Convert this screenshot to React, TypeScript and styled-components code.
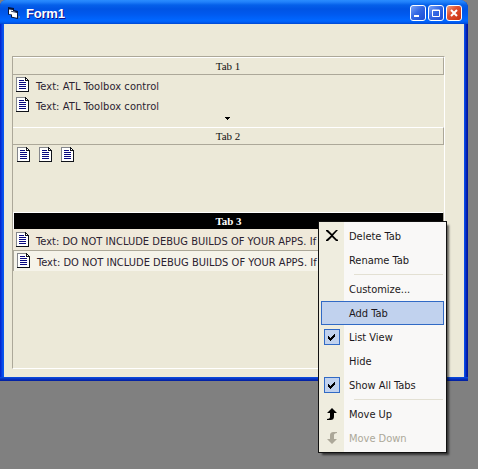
import React from 'react';
import styled, { createGlobalStyle, css } from 'styled-components';

const GlobalStyle = createGlobalStyle`
  *, *::before, *::after { box-sizing: border-box; }
  html, body { margin: 0; height: 469px; overflow: hidden; background: #808080; }
  svg { display: block; flex: none; }
`;

const uiFont = css`
  font-family: 'DejaVu Sans Condensed', 'DejaVu Sans', sans-serif;
  font-stretch: condensed;
  font-size: 11px;
  white-space: nowrap;
`;

const Desktop = styled.main`
  position: relative;
  width: 478px;
  height: 469px;
  overflow: hidden;
  background: #808080;
`;

const FormWindow = styled.section`
  display: flex;
  flex-direction: column;
  width: 468px;
  height: 381px;
  padding: 0 4px 4px;
  border-radius: 6px 8px 0 0;
  background: linear-gradient(to bottom, transparent 377px, #0a50e0 377px, #0831c0 379px, #001d9c 381px),
    linear-gradient(to right, #0020c8 0, #0831d9 1px, #0855ee 3px, #0855ee 464px, #0840dc 465px, #0018a4 467px);
`;

const TitleBar = styled.header`
  display: flex;
  align-items: center;
  height: 24px;
  flex: none;
  margin: 0 -4px;
  padding: 2px 6px 0 8px;
  border-radius: 6px 8px 0 0;
  background: linear-gradient(to bottom, #2a8cff 0, #2080fa 2px, #0560ea 5px, #0054e4 9px, #0059ee 14px, #0066ff 20px, #0060f8 22px, #0047d0 24px);
`;

const Title = styled.h1`
  flex: 1;
  margin: 0 0 0 5px;
  padding-top: 1px;
  font: bold 13px/21px 'Liberation Sans', Arial, sans-serif;
  letter-spacing: -0.2px;
  color: #fff;
  text-shadow: 1px 1px 0 #0f1089;
`;

const CaptionButtons = styled.div`
  display: flex;
  gap: 2px;
`;

const CaptionButton = styled.button<{ $close?: boolean }>`
  display: grid;
  place-items: center;
  width: 16px;
  height: 16px;
  padding: 0;
  border: 1px solid #fff;
  border-radius: 3px;
  background: ${({ $close }) =>
    $close
      ? 'linear-gradient(135deg, #f0a080, #e05030 40%, #c83010)'
      : 'linear-gradient(135deg, #7ba4f8, #3468e4 45%, #1c4cd4)'};
`;

const Client = styled.div`
  flex: 1;
  padding: 32px 19px 8px 8px;
  background: #ece9d8;
`;

const Toolbox = styled.div`
  display: flex;
  flex-direction: column;
  height: 313px;
  border: 1px solid;
  border-color: #aca899 #fff #fff #aca899;
`;

const TabSection = styled.section<{ $height: number }>`
  display: flex;
  flex-direction: column;
  height: ${({ $height }) => $height}px;
`;

const TabHeader = styled.header<{ $active?: boolean }>`
  height: 18px;
  flex: none;
  border-top: 1px solid #fff;
  border-right: 1px solid #aca899;
  border-bottom: 1px solid #aca899;
  font: 11px/16px 'Liberation Serif', 'Times New Roman', serif;
  text-align: center;
  color: #111;
  ${({ $active }) =>
    $active &&
    css`
      height: 17px;
      border-bottom: 0;
      border-left: 1px solid #fff;
      background: #000;
      color: #fff;
      font-weight: bold;
      line-height: 17px;
    `}
`;

const ToolRow = styled.div<{ $state?: 'hover' | 'pressed' }>`
  display: flex;
  align-items: flex-start;
  gap: 6px;
  height: 20px;
  flex: none;
  padding: 2px 0 0 3px;
  ${uiFont}
  line-height: 19px;
  letter-spacing: 0.08px;
  color: #2b2230;
  overflow: hidden;
  ${({ $state }) =>
    $state === 'hover' &&
    css`
      height: 22px;
      padding-top: 3px;
      border-bottom: 1px solid #aca899;
      letter-spacing: 0.03px;
      background: #efe9da;
    `}
  ${({ $state }) =>
    $state === 'pressed' &&
    css`
      border-left: 1px solid #aca899;
      letter-spacing: 0.02px;
      background: #f5f3e9;
    `}
`;

const IconStrip = styled.div`
  display: flex;
  gap: 8px;
  padding: 2px 4px;
`;

const ScrollDown = styled.div`
  display: flex;
  justify-content: center;
  padding: 2px 2px 0 0;
`;

const ContextMenu = styled.nav`
  position: absolute;
  left: 318px;
  top: 221px;
  width: 129px;
  height: 232px;
  padding: 2px;
  border: 1px solid #111;
  background: linear-gradient(to right, #efeddf 0, #efeddf 25px, #f9f8f7 25px);
  box-shadow: 3px 3px 2px -1px rgba(0, 0, 0, 0.6);
`;

const MenuItem = styled.div<{ $selected?: boolean; $disabled?: boolean }>`
  display: grid;
  grid-template-columns: 20px 1fr;
  column-gap: 7px;
  align-items: center;
  height: 24px;
  width: 123px;
  border: 1px solid ${({ $selected }) => ($selected ? '#316ac5' : 'transparent')};
  background: ${({ $selected }) => ($selected ? '#c1d2ee' : 'transparent')};
  color: ${({ $disabled }) => ($disabled ? '#aca899' : '#1c1820')};
  ${uiFont}
  letter-spacing: -0.02px;
`;

const MenuGlyph = styled.span`
  display: grid;
  place-items: center;
`;

const CheckBox = styled.span`
  display: grid;
  place-items: center;
  width: 16px;
  height: 16px;
  border: 1px solid #316ac5;
  background: #c1d2ee;
`;

const Separator = styled.hr`
  height: 1px;
  margin: 2px 1px 2px 33px;
  border: 0;
  background: #e3e0d3;
`;

const PageIcon = () => (
  <svg width="14" height="15" viewBox="0 0 14 15" shapeRendering="crispEdges">
    <path d="M0 0H9V1H10V2H11V3H13V15H0Z" fill="#fff" />
    <path d="M0 0H9V1H1V14H0Z" fill="#85878c" />
    <path d="M9 0H10V1H11V2H12V3H13V15H0V14H12V4H9Z" fill="#10131a" />
    <path d="M10 2H11V3H10Z" fill="#fff" />
    <path d="M3 3H8V4H3ZM3 5H10V6H3ZM3 7H10V8H3ZM3 9H10V10H3ZM3 11H10V12H3Z" fill="#080880" />
  </svg>
);

const FormIcon = () => (
  <svg width="13" height="13" viewBox="0 0 13 13">
    <path d="M0 0L6 1V3L10 4V12L3 10.5V8L0 7.5Z" fill="#06153c" />
    <path d="M1 2.5L5 3V4L9 5.5V10.8L4 9.8V7.5L1 7Z" fill="#fff" />
    <path d="M3 4.2L9 5.6" stroke="#06153c" strokeWidth="0.8" />
    <path d="M10.5 9H12V11H10.5Z" fill="#8b9b99" opacity="0.6" />
  </svg>
);

const CheckIcon = () => (
  <svg width="8" height="8" viewBox="0 0 8 8" shapeRendering="crispEdges">
    <path d="M0 3H1V4H2V5H3V4H4V3H5V2H6V1H7V4H6V5H5V6H4V7H3V8H2V7H1V6H0Z" fill="#000" />
  </svg>
);

const DeleteIcon = () => (
  <svg width="14" height="14" viewBox="0 0 14 14">
    <path d="M1 1H3L7 5L11 1H13L8 6.5L12 10.5H13V12H11L7 8L3 12H1V11L6 6.5L1 2Z" fill="#000" />
  </svg>
);

const MoveIcon = ({ down }: { down?: boolean }) => (
  <svg width="12" height="14" viewBox="0 0 12 14">
    <path
      d={
        down
          ? 'M11 1H8C5 1 4 2 4 5V8H1L6 13L11 8H8V4C8 3 9 2 11 2Z'
          : 'M1 13H4C7 13 8 12 8 9V6H11L6 1L1 6H4V10C4 11 3 12 1 12Z'
      }
      fill={down ? '#aca899' : '#000'}
    />
  </svg>
);

type Entry =
  | { kind: 'separator' }
  | { kind: 'item'; label: string; glyph?: React.ReactNode; selected?: boolean; disabled?: boolean };

const checked = (
  <CheckBox>
    <CheckIcon />
  </CheckBox>
);

const entries: Entry[] = [
  { kind: 'item', label: 'Delete Tab', glyph: <DeleteIcon /> },
  { kind: 'item', label: 'Rename Tab' },
  { kind: 'separator' },
  { kind: 'item', label: 'Customize...' },
  { kind: 'item', label: 'Add Tab', selected: true },
  { kind: 'item', label: 'List View', glyph: checked },
  { kind: 'item', label: 'Hide' },
  { kind: 'item', label: 'Show All Tabs', glyph: checked },
  { kind: 'separator' },
  { kind: 'item', label: 'Move Up', glyph: <MoveIcon /> },
  { kind: 'item', label: 'Move Down', glyph: <MoveIcon down />, disabled: true },
];

export default function App() {
  return (
    <Desktop>
      <GlobalStyle />
      <FormWindow>
        <TitleBar>
          <FormIcon />
          <Title>Form1</Title>
          <CaptionButtons>
            <CaptionButton aria-label="Minimize">
              <svg width="10" height="10" viewBox="0 0 10 10">
                <path d="M1 7H6V9H1Z" fill="#fff" />
              </svg>
            </CaptionButton>
            <CaptionButton aria-label="Maximize">
              <svg width="10" height="10" viewBox="0 0 10 10">
                <path d="M1.5 2H8.5V8.5H1.5ZM1 2.5H9" fill="none" stroke="#fff" />
              </svg>
            </CaptionButton>
            <CaptionButton $close aria-label="Close">
              <svg width="10" height="10" viewBox="0 0 10 10">
                <path d="M2 2L8 8M8 2L2 8" stroke="#fff" strokeWidth="2" />
              </svg>
            </CaptionButton>
          </CaptionButtons>
        </TitleBar>
        <Client>
          <Toolbox>
            <TabSection $height={70}>
              <TabHeader>Tab 1</TabHeader>
              <ToolRow><PageIcon />Text: ATL Toolbox control</ToolRow>
              <ToolRow><PageIcon />Text: ATL Toolbox control</ToolRow>
              <ScrollDown>
                <svg width="5" height="3" viewBox="0 0 5 3" shapeRendering="crispEdges">
                  <path d="M0 0H5V1H4V2H3V3H2V2H1V1H0Z" fill="#000" />
                </svg>
              </ScrollDown>
            </TabSection>
            <TabSection $height={85}>
              <TabHeader>Tab 2</TabHeader>
              <IconStrip>
                <PageIcon />
                <PageIcon />
                <PageIcon />
              </IconStrip>
            </TabSection>
            <TabSection $height={156}>
              <TabHeader $active>Tab 3</TabHeader>
              <ToolRow $state="hover"><PageIcon />Text: DO NOT INCLUDE DEBUG BUILDS OF YOUR APPS. If</ToolRow>
              <ToolRow $state="pressed"><PageIcon />Text: DO NOT INCLUDE DEBUG BUILDS OF YOUR APPS. If</ToolRow>
            </TabSection>
          </Toolbox>
        </Client>
      </FormWindow>
      <ContextMenu>
        {entries.map((entry, i) =>
          entry.kind === 'separator' ? (
            <Separator key={i} />
          ) : (
            <MenuItem key={i} $selected={entry.selected} $disabled={entry.disabled}>
              <MenuGlyph>{entry.glyph}</MenuGlyph>
              {entry.label}
            </MenuItem>
          ),
        )}
      </ContextMenu>
    </Desktop>
  );
}
